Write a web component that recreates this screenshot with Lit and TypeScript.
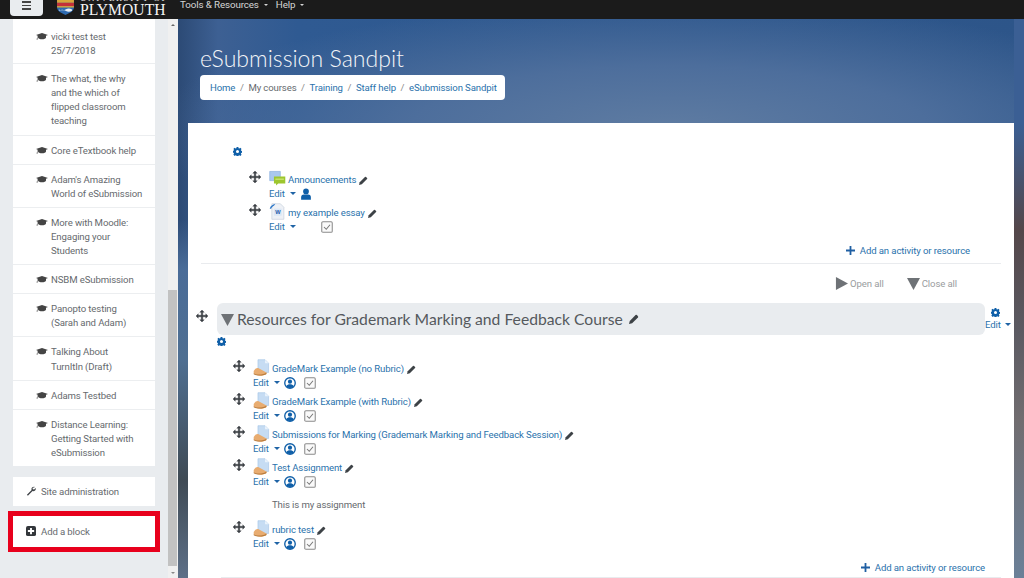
import { LitElement, html, css } from "lit";
import { customElement } from "lit/decorators.js";

const cap = html`<svg class="cap" viewBox="0 0 24 16"><path d="M12 1 0 5l4 1.600V10c0 2 4 3.600 8 3.600s8-1.600 8-3.600V6.600L24 5zM2 6.200V11l-1 3h2.600l-.8-3V6.600z" fill="#444"/></svg>`;
const move = html`<svg class="move" viewBox="0 0 16 16"><path d="M8 0 5 3h2v4H3V5L0 8l3 3V9h4v4H5l3 3 3-3H9V9h4v2l3-3-3-3v2H9V3h2z" fill="#3a3f44" stroke="#3a3f44" stroke-width=".5"/></svg>`;
const gear = html`<svg class="gear" viewBox="0 0 16 16"><path fill-rule="evenodd" d="M6.500 0h3l.4 2.100 1.400.6 1.800-1.200 2.100 2.100-1.200 1.800.6 1.400 2.100.4v3l-2.100.4-.6 1.400 1.200 1.800-2.100 2.100-1.800-1.200-1.400.6-.4 2.100h-3l-.4-2.100-1.400-.6-1.800 1.200L.6 13.500l1.200-1.800-.6-1.400-2.100-.4v-3l2.100-.4.6-1.400L.6 3.600 2.700 1.500l1.800 1.200 1.400-.6zM8 5.300a2.700 2.700 0 1 0 0 5.400 2.700 2.700 0 0 0 0-5.400z" fill="#0f5fa8"/></svg>`;
const pencil = html`<svg class="pencil" viewBox="0 0 16 16"><path d="M0 16l1.200-5L10.500 1.700a1.500 1.500 0 0 1 2.100 0l1.700 1.700a1.500 1.500 0 0 1 0 2.100L5 14.800z" fill="#3d4246"/></svg>`;
const caret = html`<span class="caret"></span>`;
const userc = html`<svg class="ico14" viewBox="0 0 16 16"><circle cx="8" cy="8" r="7" fill="none" stroke="#0f5fa8" stroke-width="1.800"/><circle cx="8" cy="6.200" r="2.800" fill="#0f5fa8"/><path d="M3 12.500c1-2.500 3-3 5-3s4 .5 5 3A7 7 0 0 1 3 12.500z" fill="#0f5fa8"/></svg>`;
const user = html`<svg class="ico14" viewBox="0 0 16 16"><circle cx="8" cy="4.500" r="3.800" fill="#0f5fa8"/><path d="M1.500 15.500V12c0-2.500 2-3.500 3.500-3.500h6c1.500 0 3.500 1 3.500 3.500v3.500z" fill="#0f5fa8"/></svg>`;
const check = html`<svg class="ico14" viewBox="0 0 16 16"><rect x="1" y="1" width="14" height="14" rx="1.500" fill="#fafafa" stroke="#8b8b8b" stroke-width="1.400"/><path d="M4 8l3 3 5-6" fill="none" stroke="#777" stroke-width="1.400"/></svg>`;
const assign = html`<svg class="activity" viewBox="0 0 24 24"><path d="M7 1h10l5 5v13H7z" fill="#c6dcf3" stroke="#9dbfe4" stroke-width=".8"/><path d="M17 1v5h5z" fill="#eaf3fb"/><path d="M1 17c2-4 5-5 7-4l11 6v2c-3 2-6 2.500-9 2.500S2 22 1 20z" fill="#e8ac70"/><path d="M1 20c3 2.500 13 3 18-1v2c-3 2.500-14 3-18 .5z" fill="#b97c3e"/></svg>`;
const forum = html`<svg class="activity" viewBox="0 0 24 24"><path d="M1 2h15v13H1z" fill="#a9c8ee" stroke="#7ea7da" stroke-width=".8"/><path d="M7 9h16v10H13l-3 3v-3H7z" fill="#9dc62e"/><path d="M9 12h12v2H9z" fill="#c9e36f"/></svg>`;
const word = html`<svg class="activity" viewBox="0 0 24 24"><path d="M4 1h12l5 5v17H4z" fill="#eef1f6" stroke="#bcc6d4" stroke-width=".8"/><path d="M1 8C2 4 5 2 9 1L7 4c-2 1-3 2-4 4z" fill="#2f78c9"/><rect x="7" y="8" width="11" height="10" fill="#dce8f6"/><text x="12.500" y="16" font-size="8" font-weight="700" font-family="Liberation Sans" text-anchor="middle" fill="#1f5aa8">W</text></svg>`;
const triDown = html`<svg class="tri" viewBox="0 0 14 14"><path d="M0 1h14L7 14z" fill="#6e7276"/></svg>`;
const triRight = html`<svg class="tri" viewBox="0 0 14 14"><path d="M1 0v14l13-7z" fill="#6e7276"/></svg>`;
const plus = html`<svg class="plus" viewBox="0 0 10 10"><path d="M4 0h2v4h4v2H6v4H4V6H0V4h4z" fill="#1f5fa3"/></svg>`;

const courses = [
  ["vicki test test", "25/7/2018"],
  ["The what, the why", "and the which of", "flipped classroom", "teaching"],
  ["Core eTextbook help"],
  ["Adam's Amazing", "World of eSubmission"],
  ["More with Moodle:", "Engaging your", "Students"],
  ["NSBM eSubmission"],
  ["Panopto testing", "(Sarah and Adam)"],
  ["Talking About", "TurnItIn (Draft)"],
  ["Adams Testbed"],
  ["Distance Learning:", "Getting Started with", "eSubmission"],
];
const assignments = [
  { name: "GradeMark Example (no Rubric)" },
  { name: "GradeMark Example (with Rubric)" },
  { name: "Submissions for Marking (Grademark Marking and Feedback Session)" },
  { name: "Test Assignment", desc: "This is my assignment" },
  { name: "rubric test" },
];

@customElement("app-root")
export class AppRoot extends LitElement {
  static styles = css`
    :host { display: block; width: 1024px; height: 578px; overflow: hidden; font-family: "Roboto", "Open Sans", sans-serif; font-size: 9.600px; letter-spacing: -.12px; color: #666a6e; background: #e9ecef; }
    svg { display: block; flex: none; }
    .top { height: 19px; background: #1b1b1b; display: flex; align-items: flex-start; overflow: hidden; }
    .burger { width: 33px; height: 16px; margin-left: 10px; background: #e9ecef; border-radius: 0 0 4px 4px; display: flex; flex-direction: column; gap: 2px; align-items: center; padding-top: 1px; box-sizing: border-box; }
    .burger i { width: 9px; height: 1.500px; background: #444; display: block; }
    .shield { width: 17px; height: 15px; margin-left: 14px; }
    .brand { margin-left: 6px; width: 94px; flex: none; color: #f4f4f4; font-family: "Liberation Serif", serif; letter-spacing: 0; }
    .brand .u { font-size: 9px; line-height: 9px; margin-top: -6px; letter-spacing: 1.600px; white-space: nowrap; height: 9px; }
    .brand .p { font-size: 15.700px; line-height: 14px; }
    .nav { display: flex; gap: 8px; margin-left: 6px; margin-top: -2px; color: #d6d6d6; line-height: 14px; font-size: 9.800px; }
    .nav span { display: flex; align-items: center; gap: 5px; }
    .nav i { width: 0; height: 0; border: 2.500px solid transparent; border-top-color: #d6d6d6; border-bottom: 0; }
    .body { display: flex; height: 559px; }
    .side { width: 168px; flex: none; background: #e9ecef; }
    .card { margin: 0 13px; background: #fff; }
    .row { padding: 8px 6px 6px 23px; border-bottom: 1px solid #eceef0; display: flex; gap: 3px; line-height: 14.100px; }
    .row:first-child { padding: 11px 6px 5px 23px; }
    .row:last-child { border-bottom: 0; }
    .cap { width: 12px; height: 9px; margin-top: 2px; }
    .lines div { white-space: nowrap; }
    .block { margin: 11px 13px 0; background: #fff; height: 29px; display: flex; align-items: center; padding-left: 13px; gap: 5px; }
    .add { margin-top: 10px; height: 31px; outline: 5px solid #e8001c; }
    .block svg { width: 10px; height: 10px; }
    .scroll { width: 10px; flex: none; background: #f0f0f0; position: relative; }
    .thumb { margin: 271px 1px 0 0; height: 276px; background: #c2c2c2; }
    .scroll::before { content: ""; position: absolute; left: 3px; top: 5px; border: 2px solid transparent; border-bottom-color: #666; border-top: 0; }
    .scroll::after { content: ""; position: absolute; left: 3px; bottom: 4px; border: 2px solid transparent; border-top-color: #888; border-bottom: 0; }
    .main { flex: 1; background:
      linear-gradient(180deg, rgba(74,108,152,0) 0, rgba(74,108,152,0) 200px, #4a6c98 250px, #4f6f92 340px, #3f4a54 461px, #5e7088 559px) left / 10px 100% no-repeat,
      linear-gradient(180deg, #3b5f94 104px, #54474a 211px, #5b5a62 311px, #716d70 401px, #6b8098 559px) right / 10px 100% no-repeat,
      radial-gradient(ellipse 520px 130px at 58% 112px, #5f7ca2 0%, #4d6e9c 50%, rgba(45,84,136,0) 100%),
      linear-gradient(90deg, #2c4a75 0, #3d6093 40px, #2f5a92 120px, #2d5589 100%); position: relative; overflow: hidden; }
    .hd { padding: 25px 0 0 22px; height: 79px; box-sizing: border-box; }
    .hd h1 { margin: 0; font: 300 23.100px/28px "Lato", sans-serif; letter-spacing: 0; color: #f3f5f8; }
    .crumb { margin-top: 3px; width: 305px; height: 25px; background: #fff; border-radius: 4px; display: flex; align-items: center; padding-left: 10px; box-sizing: border-box; gap: 4.600px; white-space: nowrap; }
    .crumb a, .link { color: #2a72ac; white-space: nowrap; }
    .crumb s { text-decoration: none; color: #888; }
    .panel { margin: 25px 10px 0; background: #fff; height: 480px; padding: 24px 13px 0; box-sizing: border-box; }
    .gear { width: 9px; height: 9px; }
    .sec0 { padding-left: 32px; }
    .act { display: grid; grid-template-columns: 20px 19px auto; height: 33px; }
    .list0 { margin: 11px 0 0 16px; }
    .move { width: 12px; height: 12px; margin-top: 4px; }
    .activity { width: 17px; height: 17px; margin-top: 3px; }
    .atop { display: flex; gap: 3px; align-items: flex-end; height: 20px; line-height: 14px; }
    .pencil { width: 9px; height: 9px; margin-bottom: 2px; }
    .abot { display: flex; align-items: center; height: 13px; gap: 4px; margin-left: -19px; }
    .edt { width: 17px; }
    .caret { width: 0; height: 0; border: 3px solid transparent; border-top-color: #1f63a5; border-bottom: 0; }
    .ico14 { width: 12px; height: 12px; }
    .chk { margin-left: 4px; }
    .chk0 { margin-left: 21px; }
    .sep { margin-top: 3px; height: 1px; background: #e9ebee; }
    .addres { display: flex; justify-content: flex-end; align-items: center; gap: 5px; height: 20px; padding-right: 31px; }
    .addres.first { margin-top: 7px; }
    .plus { width: 9px; height: 9px; }
    .oc { display: flex; justify-content: flex-end; margin-top: 11px; height: 16px; align-items: center; padding-right: 44px; color: #9a9da0; gap: 23px; }
    .oc span { display: flex; gap: 2px; align-items: center; }
    .tri { width: 13px; height: 13px; }
    .sechead { display: flex; margin-top: 12px; margin-left: -5px; }
    .h3move { width: 16px; flex: none; padding-top: 3px; margin-right: 5px; }
    .h3 { width: 768px; flex: none; height: 32px; background: #e9ecef; border-radius: 6px; display: flex; align-items: center; padding-left: 4px; box-sizing: border-box; font-family: "Lato", sans-serif; letter-spacing: 0; font-size: 15.700px; gap: 3px; color: #55595d; white-space: nowrap; }
    .h3 .pencil { margin: 0 0 0 3px; width: 10px; height: 10px; }
    .edit { padding: 5px 0 0 0; flex: none; }
    .edit .gear { margin: 0 0 2px 6px; }
    .edit div { display: flex; align-items: center; gap: 4px; }
    .g2 { margin: 2px 0 0 16px; }
    .list1 { margin: 10px 0 0 32px; }
    .withd { height: 62px; }
    .desc { margin-top: 10px; line-height: 14px; white-space: nowrap; }
    .bottomadd { margin-top: 7px; padding-right: 16px; }
    .sep2 { height: 1px; background: #e9ebee; margin: 0 0 0 20px; }
  `;

  private actRow(name: string, second: unknown, extra: unknown = null, cls = "act") {
    return html`<div class=${cls}>
      ${move}
      ${name === "Announcements" ? forum : name === "my example essay" ? word : assign}
      <div>
        <div class="atop"><span class="link">${name}</span>${pencil}</div>
        <div class="abot"><span class="link edt">Edit</span>${caret}${second}</div>
        ${extra}
      </div>
    </div>`;
  }

  render() {
    const editBits = html`${userc}<span class="chk">${check}</span>`;
    return html`
      <div class="top">
        <div class="burger"><i></i><i></i><i></i></div>
        <svg class="shield" viewBox="0 0 18 16"><path d="M0 0h18v8c0 4-5 6-9 8-4-2-9-4-9-8z" fill="#2e6ab0"/><path d="M0 0h18v3H0z" fill="#d8a63a"/><path d="M0 3h18v3.500H0z" fill="#c43038"/><path d="M0 6.500h18V8H0z" fill="#d8a63a"/><path d="M2 10q3.500 2 7 0t7 0v1.500q-3.500 2-7 0t-7 0z" fill="#e8eef4"/></svg>
        <div class="brand"><div class="u">UNIVERSITY OF</div><div class="p">PLYMOUTH</div></div>
        <div class="nav"><span>Tools &amp; Resources <i></i></span><span>Help <i></i></span></div>
      </div>
      <div class="body">
        <div class="side">
          <div class="card">
            ${courses.map((c) => html`<div class="row">${cap}<div class="lines">${c.map((l) => html`<div>${l}</div>`)}</div></div>`)}
          </div>
          <div class="block">
            <svg viewBox="0 0 16 16"><path d="M14.500 1.500a4 4 0 0 0-5.500 5L1.500 14l1.500 1.500 7.500-7.500a4 4 0 0 0 5-5l-2.500 2.500-2-.5-.5-2z" fill="#3f4347"/></svg>
            <span>Site administration</span>
          </div>
          <div class="block add">
            <svg viewBox="0 0 16 16"><rect width="16" height="16" rx="3" fill="#33373b"/><path d="M6.500 3h3v3.500H13v3H9.500V13h-3V9.500H3v-3h3.500z" fill="#fff"/></svg>
            <span>Add a block</span>
          </div>
        </div>
        <div class="scroll"><div class="thumb"></div></div>
        <div class="main">
          <div class="hd">
            <h1>eSubmission Sandpit</h1>
            <div class="crumb"><a>Home</a><s>/</s><span>My courses</span><s>/</s><a>Training</a><s>/</s><a>Staff help</a><s>/</s><a>eSubmission Sandpit</a></div>
          </div>
          <div class="panel">
            <div class="sec0">
              ${gear}
              <div class="list0">
                ${this.actRow("Announcements", html`${user}`)}
                ${this.actRow("my example essay", html`<span class="chk0">${check}</span>`)}
              </div>
            </div>
            <div class="addres first">${plus}<span class="link">Add an activity or resource</span></div>
            <div class="sep"></div>
            <div class="oc"><span>${triRight}Open all</span><span>${triDown}Close all</span></div>
            <div class="sechead">
              <div class="h3move">${move}</div>
              <div class="h3">${triDown}<span>Resources for Grademark Marking and Feedback Course</span>${pencil}</div>
              <div class="edit">${gear}<div><span class="link">Edit</span>${caret}</div></div>
            </div>
            <div class="g2">${gear}</div>
            <div class="list1">
              ${assignments.map((a) =>
                this.actRow(
                  a.name,
                  editBits,
                  a.desc ? html`<div class="desc">${a.desc}</div>` : null,
                  a.desc ? "act withd" : "act",
                ),
              )}
            </div>
            <div class="addres bottomadd">${plus}<span class="link">Add an activity or resource</span></div>
            <div class="sep2"></div>
          </div>
        </div>
      </div>
    `;
  }
}
